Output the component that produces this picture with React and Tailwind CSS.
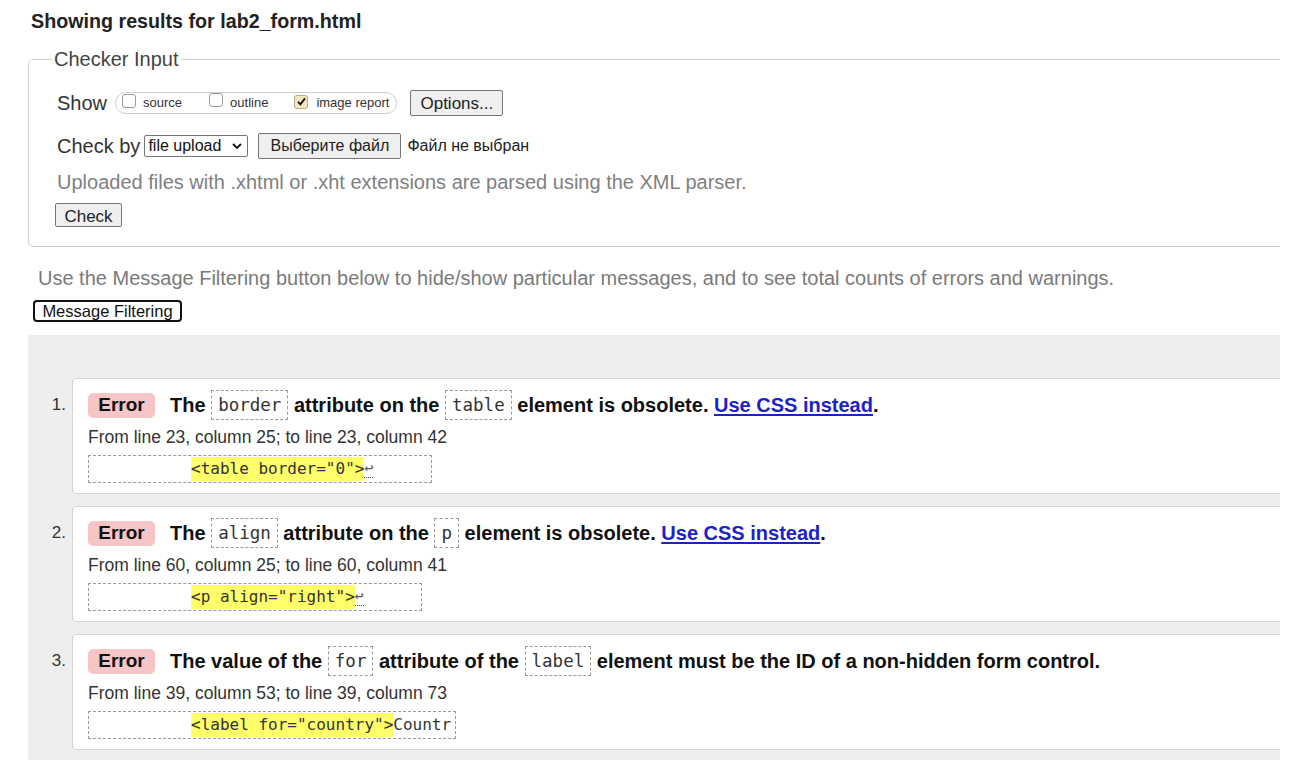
const sans = "font-['Liberation_Sans',Arial,sans-serif]"
const mono = "font-['DejaVu_Sans_Mono','Liberation_Mono',monospace]"

const messages = [
  {
    n: 1,
    title: [
      'The ',
      { code: 'border' },
      ' attribute on the ',
      { code: 'table' },
      ' element is obsolete. ',
      { link: 'Use CSS instead' },
      '.',
    ],
    from: 'From line 23, column 25; to line 23, column 42',
    hl: '<table border="0">',
    tail: null,
    ret: true,
    boxW: 'w-[344px]',
  },
  {
    n: 2,
    title: [
      'The ',
      { code: 'align' },
      ' attribute on the ',
      { code: 'p' },
      ' element is obsolete. ',
      { link: 'Use CSS instead' },
      '.',
    ],
    from: 'From line 60, column 25; to line 60, column 41',
    hl: '<p align="right">',
    tail: null,
    ret: true,
    boxW: 'w-[334px]',
  },
  {
    n: 3,
    title: [
      'The value of the ',
      { code: 'for' },
      ' attribute of the ',
      { code: 'label' },
      ' element must be the ID of a non-hidden form control.',
    ],
    from: 'From line 39, column 53; to line 39, column 73',
    hl: '<label for="country">',
    tail: 'Countr',
    ret: false,
    boxW: 'w-[368px]',
  },
]

function Checkbox({ checked }) {
  return (
    <span
      className={`mt-[-4px] inline-flex h-[14px] w-[14px] shrink-0 items-center justify-center rounded-[3px] border ${checked ? 'border-[#b8a98a] bg-[#f3e6c4]' : 'border-[#9a9a9a] bg-white'}`}
    >
      {checked && (
        <svg viewBox="0 0 12 12" className="h-[11px] w-[11px]" aria-hidden="true">
          <path d="M2.2 6.4 L4.8 9 L9.8 2.6" fill="none" stroke="#111" strokeWidth="2" />
        </svg>
      )}
    </span>
  )
}

function Message({ msg }) {
  return (
    <div className="flex">
      <div className="w-[44px] shrink-0 pr-[6px] pt-[16px] text-right text-[17px] leading-[22px] text-[#333]">{msg.n}.</div>
      <div className="flex-1 rounded-[4px] border border-[#d4d4d4] bg-white pb-[10px] pl-[15px] pt-[11px]">
        <div className="flex h-[30px] items-center whitespace-pre text-[20px] font-bold text-[#111]">
          <span className="mr-[15px] inline-flex h-[25px] w-[67px] items-center justify-center rounded-[5px] bg-[#f6c6c6] text-[19px]">Error</span>
          {msg.title.map((part, i) => {
            if (typeof part === 'string') return <span key={i}>{part}</span>
            if (part.code)
              return (
                <span
                  key={i}
                  className={`${mono} inline-flex h-[30px] items-center border border-dashed border-[#9a9a9a] px-[6px] text-[17.5px] font-normal text-[#333]`}
                >
                  {part.code}
                </span>
              )
            return (
              <a key={i} href="#" className="text-[#1a22c8] underline decoration-[1.5px] underline-offset-[2px]">
                {part.link}
              </a>
            )
          })}
        </div>
        <div className="mt-[6px] text-[17.5px] leading-[22px] text-[#333]">{msg.from}</div>
        <div
          className={`${mono} mt-[7px] flex h-[28px] items-center whitespace-pre border border-dashed border-[#9a9a9a] pl-[102px] text-[16px] text-[#333] ${msg.boxW}`}
        >
          <span className="bg-[#ffff6a]">{msg.hl}</span>
          {msg.tail && <span>{msg.tail}</span>}
          {msg.ret && <span className="border-b border-dotted border-[#555] text-[15px] leading-[17px] text-[#555]">↩</span>}
        </div>
      </div>
    </div>
  )
}

export default function App() {
  return (
    <div className={`${sans} h-[774px] w-[1302px] overflow-hidden bg-white text-[#222]`}>
      <div className="w-[1280px] overflow-hidden pb-[14px]">
        <h2 className="pl-[31px] pt-[10px] text-[19.7px] font-bold leading-[22px] text-[#222]">Showing results for lab2_form.html</h2>

        <fieldset className="ml-[28px] mt-[16px] w-[1270px] rounded-[5px] border border-[#cfcfcf] pb-[19px] pl-[28px]">
          <legend className="ml-[-5px] px-[2px] text-[20px] leading-[23px] text-[#444]">Checker Input</legend>

          <div className="mt-[19px] flex h-[26px] items-center text-[#333]">
            <span className="text-[20px]">Show</span>
            <div className="ml-[8px] flex h-[22px] items-center rounded-[11px] border border-[#cfcfcf] pl-[6px] pr-[7px] text-[13px]">
              <Checkbox />
              <span className="ml-[7px]">source</span>
              <span className="ml-[27px]"><Checkbox /></span>
              <span className="ml-[7px]">outline</span>
              <span className="ml-[26px]"><Checkbox checked /></span>
              <span className="ml-[8px]">image report</span>
            </div>
            <button type="button" className="ml-[13px] h-[26px] w-[93px] rounded-[2px] border border-[#767676] bg-[#efefef] text-[17px] text-[#222]">
              Options...
            </button>
          </div>

          <div className="mt-[17px] flex h-[26px] items-center text-[#333]">
            <span className="text-[20px]">Check by</span>
            <div className="ml-[4px] flex h-[22px] w-[104px] items-center justify-between rounded-[2px] border border-[#767676] bg-white pl-[3px] pr-[5px] text-[16px] text-[#111]">
              <span>file upload</span>
              <svg viewBox="0 0 10 6" className="h-[6px] w-[10px]" aria-hidden="true">
                <path d="M1 1 L5 5 L9 1" fill="none" stroke="#111" strokeWidth="1.8" />
              </svg>
            </div>
            <button type="button" className="ml-[10px] h-[26px] w-[143px] rounded-[2px] border border-[#767676] bg-[#efefef] text-[16px] text-[#222]">
              Выберите файл
            </button>
            <span className="ml-[6px] text-[16px] text-[#222]">Файл не выбран</span>
          </div>

          <p className="mt-[12px] text-[20px] leading-[22px] text-[#808080]">Uploaded files with .xhtml or .xht extensions are parsed using the XML parser.</p>

          <button type="button" className="ml-[-2px] mt-[10px] block h-[24px] w-[67px] rounded-[2px] border border-[#767676] bg-[#efefef] text-[17px] text-[#222]">
            Check
          </button>
        </fieldset>

        <p className="mt-[20px] pl-[38px] text-[20px] leading-[22px] text-[#7a7a7a]">
          Use the Message Filtering button below to hide/show particular messages, and to see total counts of errors and warnings.
        </p>
        <button type="button" className="ml-[33px] mt-[11px] block h-[22px] w-[149px] rounded-[4px] border-2 border-[#111] bg-white text-[16.5px] leading-[18px] text-[#111]">
          Message Filtering
        </button>

        <div className="ml-[28px] mt-[13px] flex w-[1270px] flex-col gap-[12px] bg-[#eeeeee] pb-[10px] pt-[43px]">
          {messages.map(m => (
            <Message key={m.n} msg={m} />
          ))}
        </div>
      </div>
    </div>
  )
}
